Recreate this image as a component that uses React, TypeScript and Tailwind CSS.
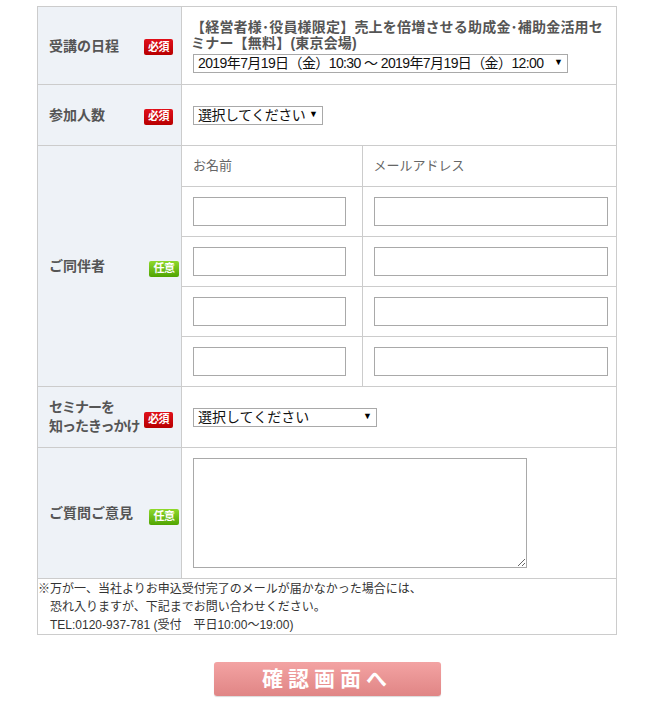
import React from 'react';

const font = { fontFamily: '"Liberation Sans", "Noto Sans CJK JP", sans-serif' };

function Badge({ required }: { required?: boolean }) {
  return required ? (
    <span className="inline-flex items-center justify-center w-[29px] h-[16px] rounded-[2px] bg-gradient-to-b from-[#e0101a] to-[#b80000] text-white text-[11px] font-bold leading-none tracking-[-0.5px]">
      必須
    </span>
  ) : (
    <span className="inline-flex items-center justify-center w-[30px] h-[16px] rounded-[2px] bg-gradient-to-b from-[#8fd92a] to-[#4fa400] text-white text-[11px] font-bold leading-none tracking-[-0.5px]">
      任意
    </span>
  );
}

function Select({ label, className, textClass = 'text-[14px]' }: { label: string; className: string; textClass?: string }) {
  return (
    <div className={`relative h-[19px] border border-[#a9a9a9] bg-white overflow-hidden ${className}`}>
      <select className={`appearance-none block w-full h-[17px] bg-transparent p-0 pl-[4px] pr-[14px] leading-[17px] text-[#111] outline-none whitespace-nowrap ${textClass}`}>
        <option>{label}</option>
      </select>
      <span className="pointer-events-none absolute right-[4px] top-[1px] text-[9px] leading-[12px] text-black">▼</span>
    </div>
  );
}

function Label({ children, required, badgeClass = 'mr-[8px]' }: { children: React.ReactNode; required?: boolean; badgeClass?: string }) {
  return (
    <td className="w-[144px] bg-[#eef2f7] border border-[#cccccc] align-middle p-0">
      <div className="flex items-center justify-between pl-[11px]">
        <span className="text-[14px] font-bold text-[#555555] leading-[20px] whitespace-nowrap">{children}</span>
        <span className={badgeClass}><Badge required={required} /></span>
      </div>
    </td>
  );
}

export default function App() {
  const companions = [0, 1, 2, 3];
  return (
    <div className="min-h-screen bg-white pt-[6px] pl-[37px]" style={font}>
      <table className="w-[580px] border-collapse">
        <tbody>
          <tr className="h-[78px]">
            <Label required>受講の日程</Label>
            <td className="border border-[#cccccc] pl-[9px] pr-[12px] align-top pt-[12px]">
              <p className="text-[14px] font-bold text-[#555555] leading-[16px] tracking-[0.2px]">
                【経営者様･役員様限定】売上を倍増させる助成金･補助金活用セミナー【無料】(東京会場)
              </p>
              <Select className="w-[375px] mt-[3px] ml-[2px]" textClass="text-[14px] tracking-[-0.6px]" label="2019年7月19日（金）10:30 ～ 2019年7月19日（金）12:00" />
            </td>
          </tr>
          <tr className="h-[61px]">
            <Label required>参加人数</Label>
            <td className="border border-[#cccccc] pl-[11px]">
              <Select className="w-[130px]" textClass="text-[14px] tracking-[-0.5px]" label="選択してください" />
            </td>
          </tr>
          <tr className="h-[240px]">
            <Label badgeClass="mr-[2px] mt-[2px]">ご同伴者</Label>
            <td className="border border-[#cccccc] p-0 align-top">
              <table className="w-full border-collapse">
                <tbody>
                  <tr className="h-[40px]">
                    <td className="w-[180px] border-r border-[#cccccc] pl-[11px] text-[13px] text-[#666666]">お名前</td>
                    <td className="pl-[11px] text-[13px] text-[#666666]">メールアドレス</td>
                  </tr>
                  {companions.map((i) => (
                    <tr key={i} className="h-[50px] border-t border-[#cccccc]">
                      <td className="border-r border-[#cccccc] pl-[11px]">
                        <input className="block w-[153px] h-[29px] border border-[#a9a9a9] bg-white outline-none" />
                      </td>
                      <td className="pl-[11px]">
                        <input className="block w-[234px] h-[29px] border border-[#a9a9a9] bg-white outline-none" />
                      </td>
                    </tr>
                  ))}
                </tbody>
              </table>
            </td>
          </tr>
          <tr className="h-[61px]">
            <Label required badgeClass="mr-[8px] mt-[2px]">
              <span className="block leading-[19px] tracking-[-1px]">セミナーを<br />知ったきっかけ</span>
            </Label>
            <td className="border border-[#cccccc] pl-[11px]">
              <Select className="w-[184px]" textClass="text-[14px]" label="選択してください" />
            </td>
          </tr>
          <tr className="h-[131px]">
            <Label badgeClass="mr-[2px] mt-[4px]">ご質問ご意見</Label>
            <td className="border border-[#cccccc] pl-[11px] align-top pt-[10px]">
              <textarea className="block w-[334px] h-[110px] border border-[#a9a9a9] bg-white outline-none resize" />
            </td>
          </tr>
          <tr className="h-[55px]">
            <td colSpan={2} className="border border-[#cccccc] align-top pt-[1px] text-[12px] text-[#333333] leading-[18px]">
              <p>※万が一、当社よりお申込受付完了のメールが届かなかった場合には、</p>
              <p className="pl-[12px]">恐れ入りますが、下記までお問い合わせください。</p>
              <p className="pl-[12px]">TEL:0120-937-781 (受付　平日10:00～19:00)</p>
            </td>
          </tr>
        </tbody>
      </table>
      <div className="w-[580px] flex justify-center mt-[27px]">
        <button className="w-[227px] h-[34px] rounded-[3px] bg-gradient-to-b from-[#f3a3a3] to-[#e08585] text-white text-[21px] font-bold tracking-[5px] shadow-[0_1px_1px_rgba(0,0,0,0.15)]">
          確認画面へ
        </button>
      </div>
    </div>
  );
}
